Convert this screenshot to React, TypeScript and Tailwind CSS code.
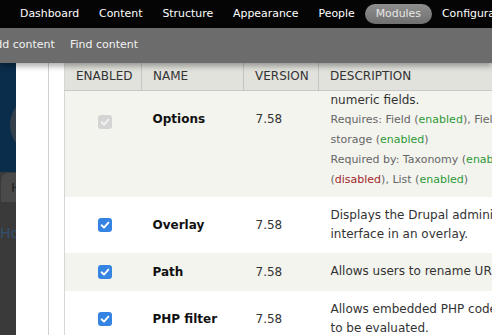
import clsx from "clsx";

const menu = ["Dashboard", "Content", "Structure", "Appearance", "People", "Modules", "Configuration"];

function Check({ disabled }: { disabled?: boolean }) {
  return (
    <span
      className={clsx(
        "inline-flex w-[14px] h-[14px] rounded-[3px] items-center justify-center align-middle",
        disabled ? "bg-[#d4d4d4]" : "bg-[#3584e4]"
      )}
    >
      <svg viewBox="0 0 14 14" className="w-[14px] h-[14px]">
        <path
          d="M3.6 7.3 L6 9.6 L10.4 4.6"
          fill="none"
          stroke={disabled ? "#f2f2f2" : "#ffffff"}
          strokeWidth="1.9"
          strokeLinecap="round"
          strokeLinejoin="round"
        />
      </svg>
    </span>
  );
}

const On = () => <span className="text-[#2e9a37]">enabled</span>;
const Off = () => <span className="text-[#a0282a]">disabled</span>;

export default function App() {
  return (
    <div className="w-[492px] h-[335px] overflow-hidden bg-white flex flex-col font-['DejaVu_Sans',sans-serif]">
      {/* Toolbar */}
      <nav className="h-[28px] shrink-0 bg-[#050505] flex items-center pl-[10px] text-[10.9px] text-white whitespace-nowrap">
        {menu.map((m) =>
          m === "Modules" ? (
            <span key={m} className="h-[20px] px-[11px] flex items-center rounded-full bg-gradient-to-b from-[#8e8e8e] to-[#707070] text-[#e6e6e6]">
              {m}
            </span>
          ) : (
            <span key={m} className="px-[10px]">
              {m}
            </span>
          )
        )}
      </nav>

      {/* Shortcuts */}
      <div className="h-[35px] shrink-0 relative z-10 bg-[#6c6c6c] flex items-center text-[11px] text-[#f2f2f2] whitespace-nowrap shadow-[0_3px_6px_rgba(0,0,0,0.35)]">
        <span className="ml-[-12px]">Add content</span>
        <span className="ml-[15px]">Find content</span>
      </div>

      <div className="flex flex-1 min-h-0">
        {/* Page under the overlay */}
        <div className="w-[16px] shrink-0 flex flex-col overflow-hidden">
          <div className="h-[109px] bg-[#0a2d4b]">
            <svg viewBox="0 0 16 109" className="w-[16px] h-[109px]">
              <circle cx="40" cy="62" r="30" fill="#34404c" />
              <circle cx="22" cy="98" r="9" fill="#0a2d4b" />
            </svg>
          </div>
          <div className="h-[30px] bg-[#3a3a3a] pl-[1px] pt-[1px]">
            <div className="h-full bg-[#4a4a4a] rounded-tl-[7px] text-[13px] leading-[30px] text-[#1e1e1e] pl-[10px]">H</div>
          </div>
          <div className="flex-1 bg-[#3a3a3a] text-[14px] text-[#33506e] pt-[21px] whitespace-nowrap">Ho</div>
        </div>

        {/* Overlay */}
        <div className="flex-1 min-w-0 flex bg-white">
          <div className="w-[33px] shrink-0 border-r border-[#d0d0d0]" />
          <div className="w-[15px] shrink-0" />
          <div className="flex-1 min-w-0 overflow-hidden">
            <table className="w-[600px] table-fixed border-collapse border-l border-[#d6d6d6] text-[12px] text-[#333]">
              <colgroup>
                <col className="w-[77px]" />
                <col className="w-[102px]" />
                <col className="w-[75px]" />
                <col />
              </colgroup>
              <thead>
                <tr className="bg-[#e1e2dc] h-[27px] border-b border-[#c8c8c8] text-left">
                  <th className="font-normal px-[11px] border-r border-[#c4c4c4]">ENABLED</th>
                  <th className="font-normal px-[11px] border-r border-[#c4c4c4]">NAME</th>
                  <th className="font-normal px-[11px] border-r border-[#c4c4c4]">VERSION</th>
                  <th className="font-normal px-[11px]">DESCRIPTION</th>
                </tr>
              </thead>
              <tbody>
                <tr className="bg-[#f3f4ee]">
                  <td className="align-top pl-[33px] pt-[22px]">
                    <Check disabled />
                  </td>
                  <td className="align-top px-[11px] pt-[19px] leading-[19px] font-bold text-[#111]">Options</td>
                  <td className="align-top px-[12px] pt-[19px] leading-[19px]">7.58</td>
                  <td className="align-top px-[12px] pb-[7px] whitespace-nowrap">
                    <div className="leading-[19px]">numeric fields.</div>
                    <div className="text-[11px] leading-[20px] text-[#666]">
                      <div>
                        Requires: Field (<On />), Field SQL
                      </div>
                      <div>
                        storage (<On />)
                      </div>
                      <div>
                        Required by: Taxonomy (<On />), Forum
                      </div>
                      <div>
                        (<Off />), List (<On />)
                      </div>
                    </div>
                  </td>
                </tr>
                <tr className="bg-white">
                  <td className="align-middle pl-[33px]">
                    <Check />
                  </td>
                  <td className="align-middle px-[11px] font-bold text-[#111]">Overlay</td>
                  <td className="align-middle px-[12px]">7.58</td>
                  <td className="px-[12px] py-[9px] leading-[19px] whitespace-nowrap">
                    <div>Displays the Drupal administration</div>
                    <div>interface in an overlay.</div>
                  </td>
                </tr>
                <tr className="bg-[#f3f4ee]">
                  <td className="align-middle pl-[33px]">
                    <Check />
                  </td>
                  <td className="align-middle px-[11px] font-bold text-[#111]">Path</td>
                  <td className="align-middle px-[12px]">7.58</td>
                  <td className="px-[12px] pt-[9px] pb-[10px] leading-[19px] whitespace-nowrap">
                    <div>Allows users to rename URLs.</div>
                  </td>
                </tr>
                <tr className="bg-white">
                  <td className="align-middle pl-[33px]">
                    <Check />
                  </td>
                  <td className="align-middle px-[11px] font-bold text-[#111]">PHP filter</td>
                  <td className="align-middle px-[12px]">7.58</td>
                  <td className="px-[12px] py-[9px] leading-[19px] whitespace-nowrap">
                    <div>Allows embedded PHP code/snippets</div>
                    <div>to be evaluated.</div>
                  </td>
                </tr>
              </tbody>
            </table>
          </div>
        </div>
      </div>
    </div>
  );
}
